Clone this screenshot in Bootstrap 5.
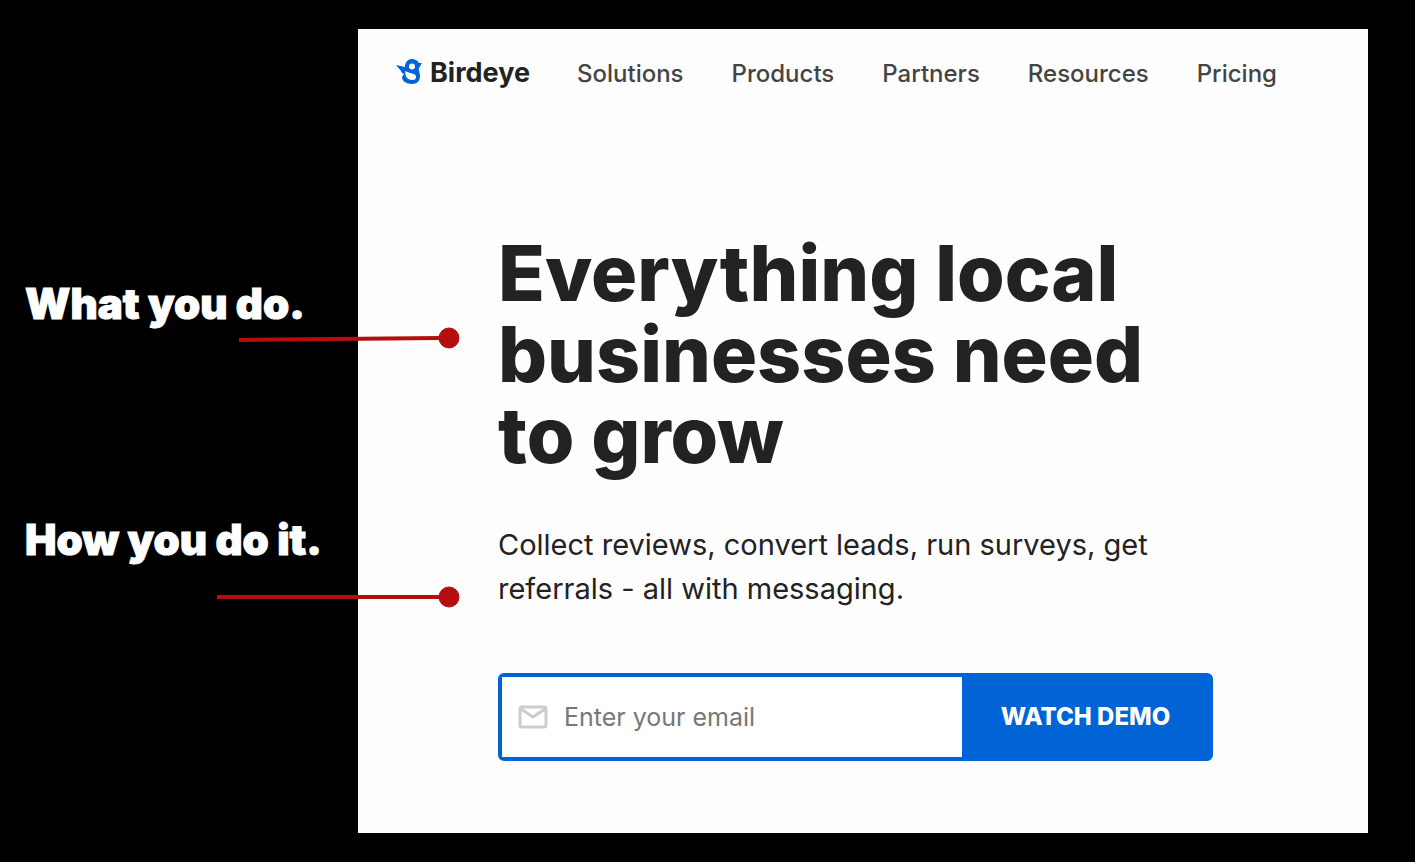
<!DOCTYPE html>
<html lang="en">
<head>
<meta charset="utf-8">
<meta name="viewport" content="width=device-width, initial-scale=1">
<title>Birdeye homepage messaging</title>
<link rel="stylesheet" href="https://cdn.jsdelivr.net/npm/bootstrap@5.3.0/dist/css/bootstrap.min.css">
<style>
  body { background: #000; color: #222; font-family: Inter, sans-serif; }
  .board { min-height: 100vh; padding: 29px 47px 29px 0; }
  .notes { flex: 0 0 358px; padding: 243px 0 0 25px; gap: 172px; z-index: 2; }
  .note { font-size: 42px; line-height: 64px; font-weight: 900; color: #fff; -webkit-text-stroke: 1px #fff; }
  .pointer { left: 192px; top: 54px; width: 243px; height: 24px; fill: #b50e0e; stroke: #b50e0e; }
  .pointer-low { top: 77px; }
  .site { background: #fefefe; min-width: 0; }
  .site-nav { --bs-navbar-nav-link-padding-x: 0; padding: 20px 38px; gap: 47px; }
  .links { gap: 48px; }
  .links .nav-link { color: #444; font-size: 24px; line-height: 32px; font-weight: 500; padding: 2px 0 0; }
  .site-nav .navbar-brand { gap: 8px; font-size: 27px; line-height: 48px; font-weight: 700; color: #222; padding: 0; margin: 0; }
  .hero { padding: 116px 0 70px 140px; max-width: 860px; }
  .hero h1 { font-size: 77px; line-height: 81px; font-weight: 800; margin: 0 0 47px; }
  .hero p { font-size: 29px; line-height: 44px; margin: 0 0 62px; }
  .signup { width: 715px; max-width: 100%; height: 88px; background: #0064d6; border: 4px solid #0064d6; border-radius: 6px; }
  .field { background: #fff; gap: 16px; padding: 0 16px; }
  .field input { font-size: 25px; line-height: 32px; padding: 0; border: 0; background: none; box-shadow: none; }
  .field input::placeholder { color: #777; }
  .signup .btn { flex: 0 0 247px; color: #fff; font-size: 24px; line-height: 32px; font-weight: 800; border: 0; }
</style>
</head>
<body>
<div class="board d-flex">
  <aside class="notes d-flex flex-column position-relative">
    <div class="note position-relative">What you do.
      <svg class="pointer position-absolute" viewBox="0 0 243 24" aria-hidden="true"><path d="M22 14 224 12" stroke-width="4"/><circle cx="232" cy="12" r="10"/></svg>
    </div>
    <div class="note position-relative">How you do it.
      <svg class="pointer pointer-low position-absolute" viewBox="0 0 243 24" aria-hidden="true"><path d="M0 12H224" stroke-width="4"/><circle cx="232" cy="12" r="10"/></svg>
    </div>
  </aside>
  <div class="site flex-grow-1">
    <nav class="site-nav navbar navbar-expand justify-content-start">
      <a class="navbar-brand d-flex align-items-center" href="#">
        <svg width="26" height="28" viewBox="0 0 26 28" aria-hidden="true"><path fill="#0064d6" fill-rule="evenodd" d="M0 6 9 8C9 3 12 0 16 0c3 0 5 1 7 4h3l-3 5c-1 2 1 4 1 8 0 5-3 8-8 8-6 0-10-3-10-7l2-3C5 14 5 12 5 12L0 6ZM16 4.500a3 3 0 1 0 0 6 3 3 0 0 0 0-6ZM9.500 12c-1 5 2 9 6.500 9 3 0 4-1 4-3 0-4-5-3-10.500-6Z"/></svg>
        <span>Birdeye</span>
      </a>
      <div class="links navbar-nav">
        <a class="nav-link" href="#">Solutions</a>
        <a class="nav-link" href="#">Products</a>
        <a class="nav-link" href="#">Partners</a>
        <a class="nav-link" href="#">Resources</a>
        <a class="nav-link" href="#">Pricing</a>
      </div>
    </nav>
    <main class="hero">
      <h1>Everything local<br>businesses need<br>to grow</h1>
      <p>Collect reviews, convert leads, run surveys, get<br>referrals - all with messaging.</p>
      <form class="signup d-flex">
        <div class="field d-flex align-items-center flex-grow-1">
          <label class="d-flex flex-shrink-0" for="email">
            <svg width="30" height="24" viewBox="0 0 30 24" fill="none" stroke="#ccc" stroke-width="3" role="img" aria-label="Email"><rect x="2" y="2" width="26" height="20" rx="2"/><path d="m3 4 12 8 12-8"/></svg>
          </label>
          <input class="form-control" type="email" id="email" placeholder="Enter your email">
        </div>
        <button class="btn" type="submit">WATCH DEMO</button>
      </form>
    </main>
  </div>
</div>
<script src="https://cdn.jsdelivr.net/npm/bootstrap@5.3.0/dist/js/bootstrap.bundle.min.js"></script>
</body>
</html>
